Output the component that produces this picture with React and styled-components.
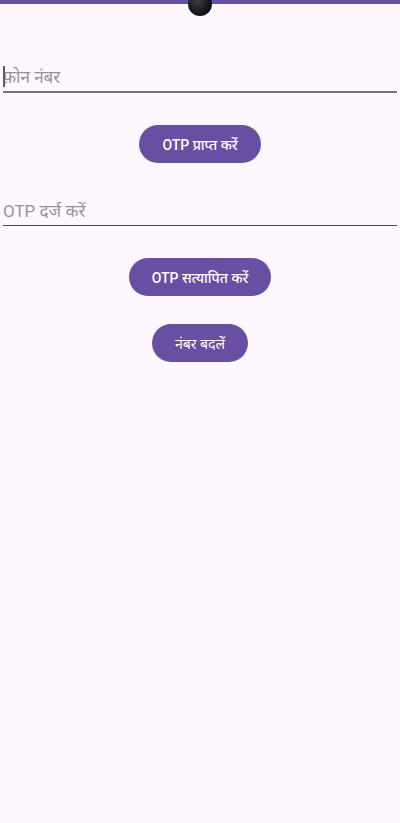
import React from "react";
import styled, { createGlobalStyle } from "styled-components";

const Global = createGlobalStyle`
  html, body { margin: 0; padding: 0; background: #FEF7FF; }
  body { font-family: Roboto, "Noto Sans", "DejaVu Sans", sans-serif; }
  * { box-sizing: border-box; }
`;

const Page = styled.div`
  position: relative;
  min-height: 823px;
  background: #FEF7FF;
  display: flex;
  flex-direction: column;
`;

const TopBar = styled.div`
  height: 4px;
  background: #6750A4;
`;

const Camera = styled.div`
  position: absolute;
  left: 188px;
  top: -8px;
  width: 24px;
  height: 24px;
  border-radius: 50%;
  background: radial-gradient(circle at 40% 40%, #3a3d44 0%, #15161a 55%, #050506 100%);
`;

const Content = styled.div`
  display: flex;
  flex-direction: column;
  padding: 0 3px;
`;

const Field = styled.div`
  position: relative;
  margin-top: ${(p) => p.$top}px;
  height: ${(p) => (p.$focused ? 30 : 29)}px;
  border-bottom: ${(p) => (p.$focused ? "2px solid #7A7680" : "1px solid #49454F")};
  display: flex;
  align-items: center;
`;

const Input = styled.input`
  border: none;
  outline: none;
  background: transparent;
  width: 100%;
  padding: 0;
  font-family: Roboto, "Noto Sans", sans-serif;
  font-size: 17px;
  color: #1D1B20;
  caret-color: #6750A4;
  &::placeholder { color: #96929B; }
`;

const Caret = styled.span`
  position: absolute;
  left: 0;
  top: 3px;
  width: 2px;
  height: 21px;
  background: #5f5a66;
`;

const Button = styled.button`
  align-self: center;
  margin-top: ${(p) => p.$top}px;
  height: 38px;
  padding: 0 ${(p) => p.$px}px;
  border: none;
  border-radius: 19px;
  background: #6750A4;
  color: #FFFFFF;
  font-family: Roboto, "Noto Sans", sans-serif;
  font-size: 14px;
  font-weight: ${(p) => (p.$bold ? 500 : 400)};
  cursor: pointer;
`;

export default function App() {
  return (
    <Page>
      <Global />
      <TopBar />
      <Camera />
      <Content>
        <Field $top={59} $focused>
          <Caret />
          <Input placeholder="फ़ोन नंबर" />
        </Field>
        <Button $top={32} $px={23} $bold>OTP प्राप्त करें</Button>
        <Field $top={34}>
          <Input placeholder="OTP दर्ज करें" />
        </Field>
        <Button $top={32} $px={23} $bold>OTP सत्यापित करें</Button>
        <Button $top={28} $px={23}>नंबर बदलें</Button>
      </Content>
    </Page>
  );
}
